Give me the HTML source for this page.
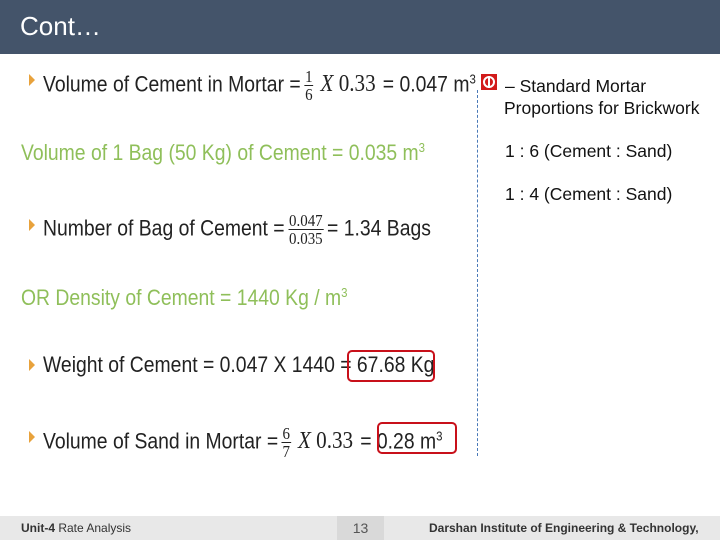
<!DOCTYPE html>
<html><head><style>
body{margin:0;width:720px;height:540px;position:relative;overflow:hidden;background:#fff;font-family:"Liberation Sans",sans-serif;}
.hdr{position:absolute;left:0;top:0;width:720px;height:54px;background:#44546a;}
.hdr span{position:absolute;left:20px;top:11px;color:#fff;font-size:26px;}
.l{position:absolute;white-space:nowrap;font-size:22px;color:#222;transform-origin:0 0;transform:scaleX(.88);line-height:24px;}
.g{color:#8fbf5a;}
.bul{position:absolute;width:0;height:0;border-left:6px solid #e8a23c;border-top:6px solid transparent;border-bottom:6px solid transparent;}
.fr{display:inline-block;vertical-align:middle;text-align:center;font-family:"Liberation Serif",serif;font-size:17px;line-height:17px;margin:0 4px;}
.fr span{display:block;}
.fr .n{border-bottom:1px solid #222;padding:0 1px;}
.ser{font-family:"Liberation Serif",serif;font-size:24px;margin-left:4px;margin-right:2px;}
sup{font-size:13px;vertical-align:8px;line-height:0;}
.box{position:absolute;border:2.5px solid #c8101a;border-radius:5px;}
.r{position:absolute;font-size:17.5px;color:#111;white-space:nowrap;}
.dash{position:absolute;left:477px;top:90px;height:366px;border-left:1px dashed #4a7ab8;}
.ft{position:absolute;left:0;top:516px;width:720px;height:24px;background:#e8e8e8;font-size:12px;color:#333;}
</style></head><body>
<div class="hdr"><span>Cont…</span></div>

<div class="bul" style="left:29px;top:74px"></div>
<div class="l" style="left:43px;top:68px">Volume of Cement in Mortar =<span class="fr"><span class="n">1</span><span>6</span></span><span class="ser"><i>X</i> 0.33</span> = 0.047 m<sup>3</sup></div>

<div class="l g" style="left:21px;top:141px">Volume of 1 Bag (50 Kg) of Cement = 0.035 m<sup>3</sup></div>

<div class="bul" style="left:29px;top:219px"></div>
<div class="l" style="left:43px;top:212px">Number of Bag of Cement =<span class="fr"><span class="n">0.047</span><span>0.035</span></span>= 1.34 Bags</div>

<div class="l g" style="left:21px;top:286px">OR Density of Cement = 1440 Kg / m<sup>3</sup></div>

<div class="bul" style="left:29px;top:359px"></div>
<div class="l" style="left:43px;top:353px">Weight of Cement = 0.047 X 1440 = 67.68 Kg</div>
<div class="box" style="left:347px;top:350px;width:84px;height:28px"></div>

<div class="bul" style="left:29px;top:431px"></div>
<div class="l" style="left:43px;top:425px">Volume of Sand in Mortar =<span class="fr"><span class="n">6</span><span>7</span></span><span class="ser"><i>X</i> 0.33</span> = 0.28 m<sup>3</sup></div>
<div class="box" style="left:377px;top:422px;width:76px;height:28px"></div>

<div class="dash"></div>
<div style="position:absolute;left:481px;top:74px;width:16px;height:16px;background:#d21a1a;"><div style="position:absolute;left:2px;top:2px;width:8px;height:8px;border:2px solid #fff;border-radius:50%;"></div><div style="position:absolute;left:7px;top:2px;width:2px;height:12px;background:#fff;"></div></div>
<div class="r" style="left:505px;top:76px">– Standard Mortar</div>
<div class="r" style="left:504px;top:98px">Proportions for Brickwork</div>
<div class="r" style="left:505px;top:141px">1 : 6 (Cement : Sand)</div>
<div class="r" style="left:505px;top:184px">1 : 4 (Cement : Sand)</div>

<div class="ft">
<span style="position:absolute;left:21px;top:5px"><b>Unit-4</b> Rate Analysis</span>
<div style="position:absolute;left:337px;top:0;width:47px;height:24px;background:#d9d9d9;text-align:center;line-height:24px;font-size:14px;color:#555">13</div>
<span style="position:absolute;left:429px;top:5px;font-weight:bold">Darshan Institute of Engineering &amp; Technology,</span>
</div>
</body></html>
